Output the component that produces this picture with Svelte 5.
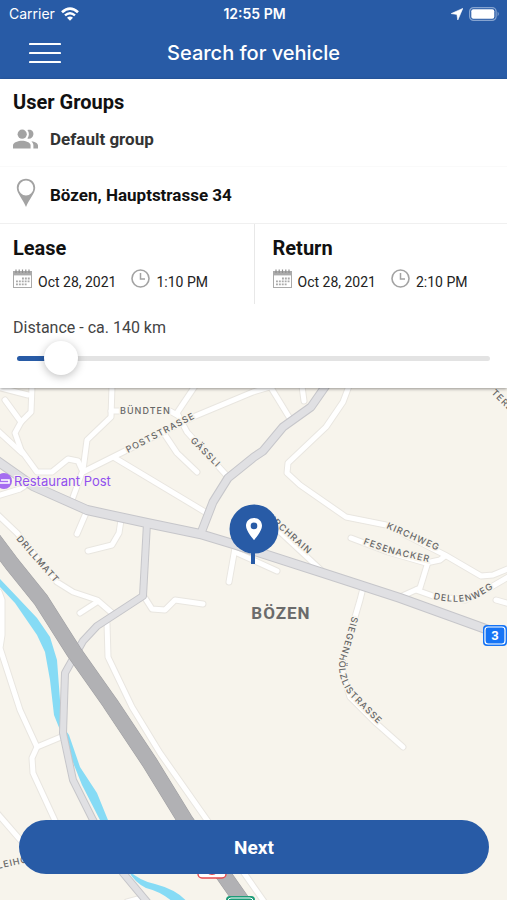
<script lang="ts">
  interface Slot {
    title: string;
    date: string;
    time: string;
  }

  const slots: Slot[] = [
    { title: 'Lease', date: 'Oct 28, 2021', time: '1:10 PM' },
    { title: 'Return', date: 'Oct 28, 2021', time: '2:10 PM' },
  ];

  const maxDistance = 2250;
  let distance = $state(140);
  let filled = $derived((distance / maxDistance) * 100);

  const streets = [
    'M112 386 L111 417 L87 440 L83 470 L72 500',
    'M111 411 L170 411 L177 415',
    'M273 386 L253 392 L193 417 L113 457 L83 472',
    'M115 458 L205 512',
    'M195 386 L177 413 L187 432 L228 477',
    'M165 435 L177 453 L197 472',
    'M32 386 L31 412 L21 422 L15 433 L21 450 L37 472 L52 472 L68 459 L78 461 L83 472',
    'M5 400 L21 422',
    'M-3 430 L22 453',
    'M-3 387 L28 395',
    'M-3 496 L20 489 L28 484',
    'M86 513 L77 534',
    'M121 520 L119 533 L112 545 L88 551',
    'M-3 514 L17 533 L57 582 L73 592 L97 600 L112 613',
    'M80 613 L97 602',
    'M107 623 L108 657 L132 707 L160 753 L207 820 L265 903',
    'M145 598 L152 609 L165 610 L175 600 L203 604',
    'M-1 592 L2 600 L2 635 L0 648 L20 710 L37 747 L32 758 L33 773 L57 825',
    'M37 747 L61 737',
    'M-3 813 L23 843',
    'M127 902 L138 899',
    'M235 548 L229 582',
    'M235 552 L277 571',
    'M270 386 L289 417',
    'M302 386 L304 401',
    'M349 386 L343 402 L326 427 L288 463 L287 473 L300 485 L346 517 L386 525 L445 555 L481 576 L493 575 L510 568',
    'M351 538 L388 552 L426 563 L440 560 L445 556',
    'M428 562 L420 588 L400 597',
    'M416 590 L433 596 L465 600 L486 590 L510 576',
    'M496 600 L510 604',
    'M265 518 L321 570',
    'M363 588 L360 600 L355 617 L344 655 L343 675 L350 697 L376 723 L403 747',
  ];

  const mainRoads = [
    { d: 'M-4 460 L33 486 L87 510 L147 523 L200 534 L233 544 L323 573 L400 598 L483 628 L510 638', width: 8 },
    { d: 'M201 533 L213 502 L228 478 L254 457 L263 451 L283 427 L311 407 L327 384', width: 7 },
    { d: 'M147 523 L143 596 L97 626 L83 641 L65 673 L63 733 L73 780 L93 820 L123 873 L148 903', width: 6 },
  ];

  const highway = 'M-6 540 L12 564 L41 600 L74 652 L110 703 L150 763 L185 820 L244 904';

  const labels = [
    { id: 'bundten', text: 'BÜNDTEN', d: 'M120 414 L200 414' },
    { id: 'poststrasse', text: 'POSTSTRASSE', d: 'M128 453 L220 405' },
    { id: 'gassli', text: 'GÄSSLI', d: 'M190 441 L245 496' },
    { id: 'drillmatt', text: 'DRILLMATT', d: 'M16 539 L80 612' },
    { id: 'kirchrain', text: 'KIRCHRAIN', d: 'M265 516 L330 574' },
    { id: 'kirchweg', text: 'KIRCHWEG', d: 'M386 528 L470 565' },
    { id: 'fesenacker', text: 'FESENACKER', d: 'M363 544 L388 553 L450 567' },
    { id: 'dellenweg', text: 'DELLENWEG', d: 'M433 599 Q466 606 482 595 L510 578' },
    { id: 'siegenholzli', text: 'SIEGENHÖLZLISTRASSE', d: 'M352 616 Q344 646 340 657 Q336 678 350 696 L392 738' },
    { id: 'leihof', text: 'LEIHOF', d: 'M-2 869 L50 857' },
    { id: 'terberg', text: 'TERBERG', d: 'M491 393 L530 432' },
  ];
</script>

<div class="app">
  <header>
    <div class="status">
      <div class="carrier">
        <span>Carrier</span>
        <svg width="18" height="14" viewBox="0 0 18 14" aria-hidden="true">
          <path d="M1 5.2 Q9 -2 17 5.2" fill="none" stroke="#fff" stroke-width="2.7" />
          <path d="M4 8.4 Q9 3.9 14 8.4" fill="none" stroke="#fff" stroke-width="2.4" />
          <path d="M9 13.8 L6 10.8 Q9 8.4 12 10.8 Z" fill="#fff" />
        </svg>
      </div>
      <span class="clock">12:55 PM</span>
      <div class="power">
        <svg width="12" height="12" viewBox="0 0 12 12" aria-hidden="true">
          <path d="M11.8 0.4 L6.8 12 L5.9 6.4 L0.2 5.6 Z" fill="#fff" stroke="#fff" stroke-width="0.6" />
        </svg>
        <svg width="31" height="14" viewBox="0 0 31 14" aria-hidden="true">
          <rect x="0.6" y="0.6" width="26.5" height="12.8" rx="4" fill="none" stroke="#86a4d0" stroke-width="1.2" />
          <rect x="2.3" y="2.3" width="23" height="9.4" rx="2" fill="#fff" />
          <path d="M28.6 4.6 Q31 7 28.6 9.4 Z" fill="#86a4d0" />
        </svg>
      </div>
    </div>
    <div class="bar">
      <button class="menu" aria-label="Menu">
        <svg width="32" height="22" viewBox="0 0 32 22">
          <path d="M1 2 H31 M1 11 H31 M1 20 H31" stroke="#fff" stroke-width="2.2" stroke-linecap="round" />
        </svg>
      </button>
      <h1>Search for vehicle</h1>
    </div>
  </header>

  <section class="panel">
    <div class="groups">
      <h2>User Groups</h2>
      <button class="row group">
        <svg width="26" height="22" viewBox="0 0 26 22" aria-hidden="true">
          <g fill="#a3a3a3">
            <circle cx="9.2" cy="6.2" r="4.6" />
            <path d="M0 20.5 V17.5 C0 14.4 5.4 12.8 9 12.8 S17.6 14.4 17.6 17.5 V20.5 Z" />
            <path d="M14.4 2 C18.5 0.7 20.8 3.4 20.4 6.4 C20 9.6 17.4 11.3 14.4 10.4 C16.4 7.8 16.4 4.6 14.4 2 Z" />
            <path d="M18.4 13.2 C22 13.8 25 15.2 25 17.6 V20.5 H20.4 V17.6 C20.4 15.8 19.6 14.4 18.4 13.2 Z" />
          </g>
        </svg>
        <span>Default group</span>
      </button>
    </div>

    <button class="row address">
      <svg width="26" height="34" viewBox="0 0 26 34" aria-hidden="true">
        <path
          fill-rule="evenodd"
          fill="#a3a3a3"
          d="M13 0.8 C7.7 0.8 3.8 4.7 3.8 9.8 C3.8 15.4 9.6 20.6 13 29 C16.4 20.6 22.2 15.4 22.2 9.8 C22.2 4.7 18.3 0.8 13 0.8 Z M13 2.6 A7.4 7.4 0 1 1 13 17.4 A7.4 7.4 0 1 1 13 2.6 Z"
        />
      </svg>
      <span>Bözen, Hauptstrasse 34</span>
    </button>

    <div class="slots">
      {#each slots as slot}
        <div class="slot">
          <h2>{slot.title}</h2>
          <div class="when">
            <button class="date">
              <svg width="19" height="19" viewBox="0 0 19 19" aria-hidden="true">
                <rect x="0.5" y="2.5" width="18" height="16" fill="none" stroke="#aaa" />
                <rect x="0.5" y="2" width="18" height="4.4" fill="#aaa" />
                <path d="M3 0.4 V4 M6.2 0.4 V4 M9.5 0.4 V4 M12.8 0.4 V4 M16 0.4 V4" stroke="#8f8f8f" stroke-width="1.2" />
                <path d="M9 9.5 H17 M3 12.4 H17 M3 15.4 H14" stroke="#aaa" stroke-width="1.9" stroke-dasharray="1.9 1" />
              </svg>
              <span>{slot.date}</span>
            </button>
            <button class="time">
              <svg width="19" height="19" viewBox="0 0 19 19" aria-hidden="true">
                <circle cx="9.5" cy="9.5" r="8.5" fill="none" stroke="#a3a3a3" stroke-width="1.6" />
                <path d="M9.5 4 V10 H14" fill="none" stroke="#a3a3a3" stroke-width="1.5" />
              </svg>
              <span>{slot.time}</span>
            </button>
          </div>
        </div>
      {/each}
    </div>

    <div class="distance">
      <label for="distance">Distance - ca. {distance} km</label>
      <input
        id="distance"
        type="range"
        min="0"
        max={maxDistance}
        step="10"
        bind:value={distance}
        style="--filled: {filled}%"
      />
    </div>
  </section>

  <main class="map">
    <svg class="tiles" viewBox="0 388 507 512" preserveAspectRatio="xMidYMid slice" role="img" aria-label="Map of Bözen">
      <!-- River -->
      <g fill="#86dbf5">
        <path d="M-2 577 L20 600 L37 618 L50 637 L57 660 L60 700 L62 725 L69 735 L80 767 L97 793 L112 830 L103 826 L82 785 L66 745 L54 715 L50 680 L45 652 L37 635 L15 603 L-2 585 Z" />
        <path d="M128 870 Q140 881 155 884 Q178 890 188 903 L174 903 Q162 892 146 888 Q134 882 128 870 Z" />
      </g>

      <!-- Streets: casing first so that junctions stay open -->
      <g class="lines casing">
        {#each streets as d}
          <path {d} stroke-width="7" />
        {/each}
      </g>
      <g class="lines street">
        {#each streets as d}
          <path {d} stroke-width="5" />
        {/each}
      </g>

      <g class="lines road-casing">
        {#each mainRoads as road}
          <path d={road.d} stroke-width={road.width + 2} />
        {/each}
      </g>
      <g class="lines road">
        {#each mainRoads as road}
          <path d={road.d} stroke-width={road.width} />
        {/each}
      </g>

      <g class="lines">
        <path d={highway} stroke="#9d9da0" stroke-width="16" />
        <path d={highway} stroke="#b1b1b4" stroke-width="15" />
      </g>

      <!-- Labels -->
      {#each labels as label}
        <path id={label.id} d={label.d} fill="none" />
        <text class="street-name"><textPath href="#{label.id}">{label.text}</textPath></text>
      {/each}
      <text class="town" x="281" y="619" text-anchor="middle">BÖZEN</text>

      <circle cx="4" cy="481" r="8" fill="#a56df0" />
      <path d="M-1 477 V485 M-1 483 H9 V480 H1" stroke="#fff" stroke-width="1.6" fill="none" />
      <text class="poi" x="14" y="486">Restaurant Post</text>

      <!-- Road shields -->
      <rect x="483" y="625" width="24" height="21" rx="4" fill="#1674f5" />
      <rect x="485" y="627" width="20" height="17" rx="3" fill="#1674f5" stroke="#fff" stroke-width="1.2" />
      <text class="shield" x="495" y="640" text-anchor="middle">3</text>
      <rect x="198" y="858" width="28" height="20" rx="4" fill="#fff" stroke="#e5484d" stroke-width="1.4" />
      <circle cx="212" cy="868" r="7" fill="#e5484d" />
      <rect x="226" y="896" width="29" height="18" rx="4" fill="#1c9c78" />
      <rect x="228" y="898" width="25" height="14" rx="3" fill="none" stroke="#fff" />

      <!-- Vehicle search pin -->
      <path d="M253 550 V564" stroke="#285ba6" stroke-width="4" />
      <circle cx="254" cy="529" r="24.5" fill="#285ba6" />
      <path
        fill-rule="evenodd"
        fill="#fff"
        d="M254 518 C249.4 518 246 521.4 246 525.7 C246 531.3 254 540 254 540 S262 531.3 262 525.7 C262 521.4 258.6 518 254 518 Z M254 522.6 A3.3 3.3 0 1 1 254 529.2 A3.3 3.3 0 1 1 254 522.6 Z"
      />
    </svg>

    <button class="next">Next</button>
  </main>
</div>

<style>
  :global(body) {
    margin: 0;
  }

  .app {
    min-height: 100vh;
    display: flex;
    flex-direction: column;
    background: #fff;
    font-family: Roboto, 'Liberation Sans', sans-serif;
    color: #111;
  }

  button {
    font: inherit;
    color: inherit;
    background: none;
    border: 0;
    padding: 0;
    text-align: left;
    cursor: pointer;
  }

  svg {
    display: block;
    flex: none;
  }

  h1,
  h2 {
    margin: 0;
  }

  header {
    background: #285ba6;
    color: #fff;
    font-family: Inter, 'Liberation Sans', sans-serif;
  }

  .status {
    display: grid;
    grid-template-columns: 1fr auto 1fr;
    align-items: center;
    height: 27px;
    padding: 0 7px 0 9px;
    font-size: 14px;
  }

  .carrier,
  .power {
    display: flex;
    align-items: center;
    gap: 6px;
  }

  .power {
    justify-content: flex-end;
  }

  .clock {
    font-weight: 600;
  }

  .bar {
    display: grid;
    grid-template-columns: 48px 1fr 48px;
    align-items: center;
    height: 52px;
    padding: 0 29px;
  }

  h1 {
    font-size: 20px;
    font-weight: 500;
    text-align: center;
  }

  .panel {
    position: relative;
    z-index: 1;
    background: #fff;
    box-shadow: 0 1px 3px rgba(0, 0, 0, 0.4);
  }

  h2 {
    font-size: 20px;
    line-height: 24px;
    font-weight: 700;
  }

  .groups {
    padding: 11px 13px 14px;
    border-bottom: 1px solid #fafafa;
  }

  .row {
    display: flex;
    align-items: center;
    gap: 11px;
    width: 100%;
    font-size: 17px;
    font-weight: 700;
  }

  .group {
    margin-top: 12px;
    height: 26px;
    color: #333;
  }

  .address {
    height: 57px;
    padding: 0 13px;
    border-bottom: 1px solid #f0f0f0;
  }

  .slots {
    display: grid;
    grid-template-columns: 1fr 1fr;
  }

  .slot {
    height: 80px;
    box-sizing: border-box;
    padding: 12px 13px 0;
  }

  .slot + .slot {
    border-left: 1px solid #e8e8e8;
    padding-left: 18px;
  }

  .when {
    display: flex;
    gap: 15px;
    margin-top: 9px;
    font-size: 14px;
    line-height: 26px;
    color: #222;
  }

  .date,
  .time {
    display: flex;
    align-items: flex-start;
    gap: 6px;
    white-space: nowrap;
  }

  .distance {
    padding: 14px 13px 13px;
  }

  label {
    display: block;
    font-size: 16px;
    line-height: 20px;
    color: #444;
  }

  input {
    appearance: none;
    display: block;
    width: calc(100% - 8px);
    height: 34px;
    margin: 3px 4px 0;
    background: none;
  }

  input::-webkit-slider-runnable-track {
    height: 5px;
    border-radius: 3px;
    background: linear-gradient(to right, #285ba6 var(--filled), #e3e3e3 var(--filled));
  }

  input::-webkit-slider-thumb {
    appearance: none;
    width: 34px;
    height: 34px;
    margin-top: -15px;
    border-radius: 50%;
    background: #fff;
    box-shadow: 0 2px 8px rgba(0, 0, 0, 0.25);
  }

  .map {
    flex: 1;
    min-height: 320px;
    position: relative;
    overflow: hidden;
    background: #f7f4ec;
  }

  .tiles {
    position: absolute;
    inset: 0;
    width: 100%;
    height: 100%;
  }

  .lines {
    fill: none;
    stroke-linecap: round;
    stroke-linejoin: round;
  }

  .casing {
    stroke: #e9e6e0;
  }

  .street {
    stroke: #fff;
  }

  .road-casing {
    stroke: #c6c6ca;
  }

  .road {
    stroke: #e0e0e3;
  }

  .street-name {
    font-family: Inter, 'Liberation Sans', sans-serif;
    font-size: 9px;
    font-weight: 500;
    letter-spacing: 1px;
    fill: #666;
    stroke: #f7f4ec;
    stroke-width: 3px;
    paint-order: stroke;
  }

  .town {
    font-family: 'Liberation Sans Narrow', Roboto, sans-serif;
    font-size: 17px;
    font-weight: 700;
    letter-spacing: 1px;
    fill: #6b6b6b;
  }

  .poi {
    font-family: Inter, 'Liberation Sans', sans-serif;
    font-size: 13px;
    fill: #9150ee;
    stroke: #f7f4ec;
    stroke-width: 2px;
    paint-order: stroke;
  }

  .shield {
    font-size: 13px;
    font-weight: 700;
    fill: #fff;
  }

  .next {
    position: absolute;
    left: 19px;
    right: 18px;
    bottom: 26px;
    height: 54px;
    border-radius: 27px;
    background: #285ba6;
    color: #fff;
    font-size: 19px;
    font-weight: 700;
    text-align: center;
  }
</style>
